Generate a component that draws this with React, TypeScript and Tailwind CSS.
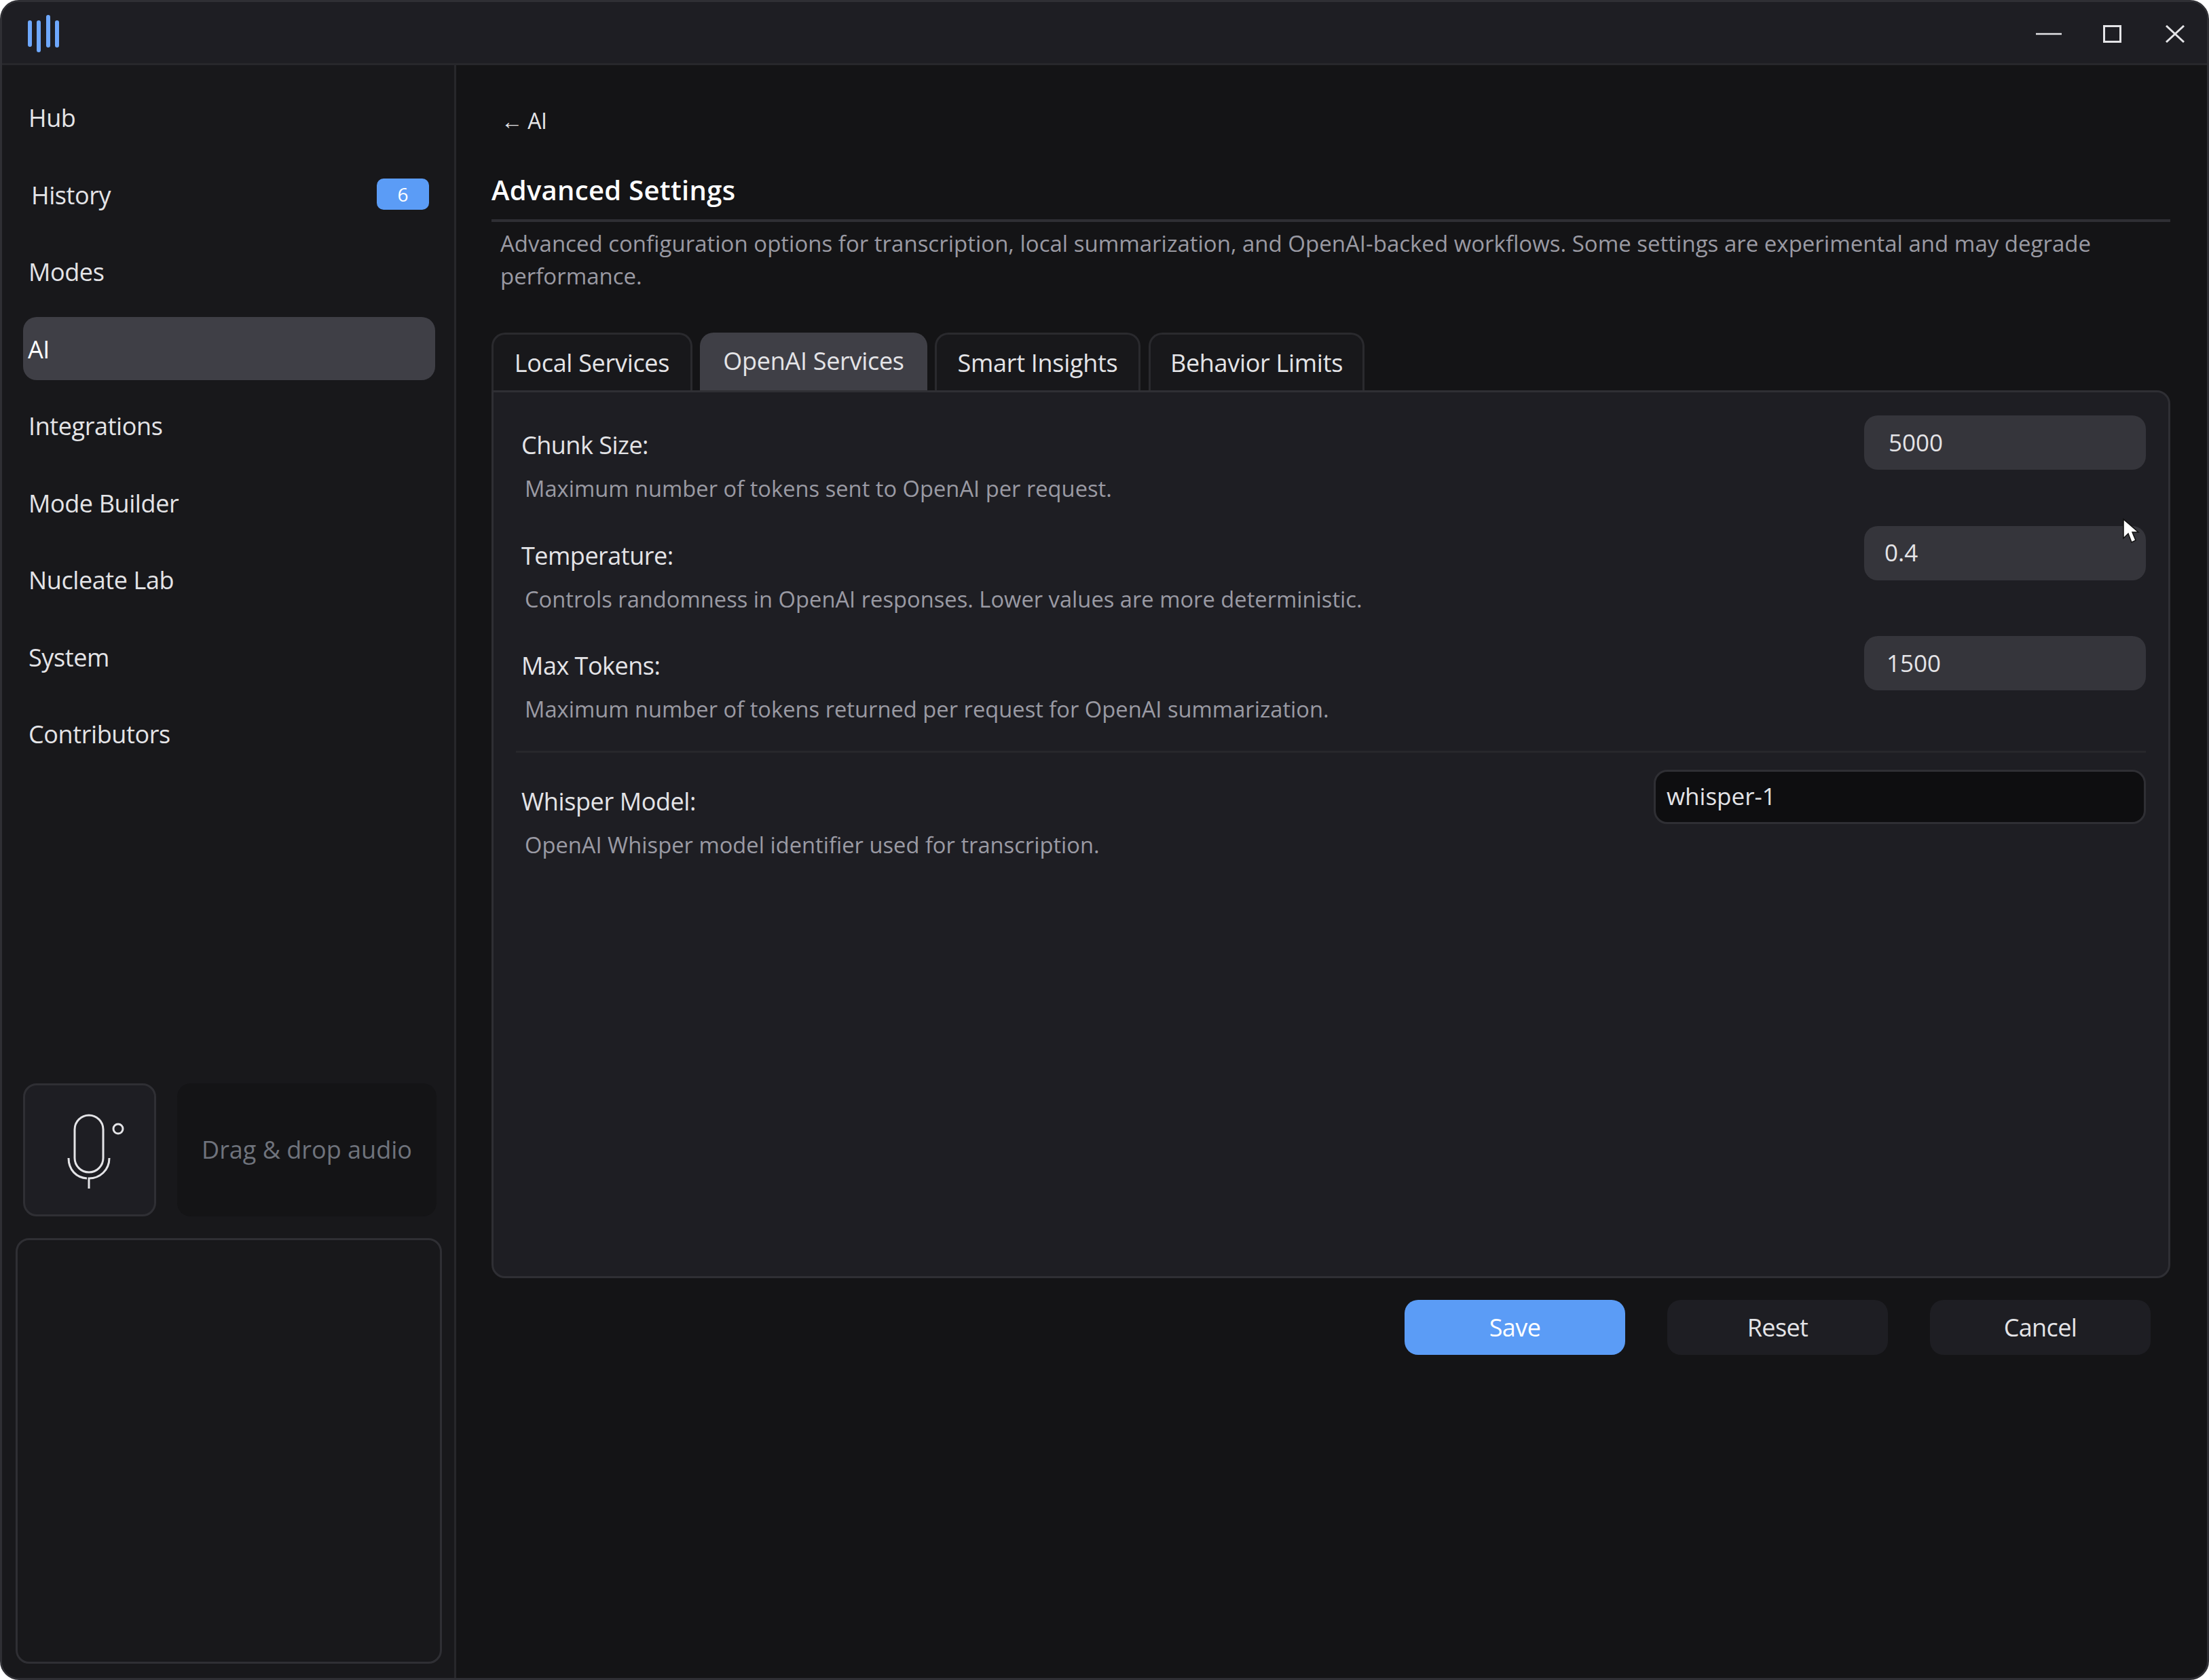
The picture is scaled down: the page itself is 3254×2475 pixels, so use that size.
const NAV = ["Hub", "History", "Modes", "AI", "Integrations", "Mode Builder", "Nucleate Lab", "System", "Contributors"];
const TABS = [
  { label: "Local Services", w: "w-[296px]" },
  { label: "OpenAI Services", w: "w-[335px]" },
  { label: "Smart Insights", w: "w-[303px]" },
  { label: "Behavior Limits", w: "w-[318px] ml-[1px]" },
];
const ROWS = [
  { label: "Chunk Size:", desc: "Maximum number of tokens sent to OpenAI per request.", value: "5000", pad: "pl-[36px]" },
  { label: "Temperature:", desc: "Controls randomness in OpenAI responses. Lower values are more deterministic.", value: "0.4", pad: "pl-[30px]" },
  { label: "Max Tokens:", desc: "Maximum number of tokens returned per request for OpenAI summarization.", value: "1500", pad: "pl-[33px]" },
];

function Logo() {
  return (
    <svg width="46" height="56" viewBox="0 0 46 56" fill="none" stroke="#6ea8fe" strokeWidth="6" strokeLinecap="round">
      <path d="M3 11V44M16 11V52M30 3V45M43 11V45" />
    </svg>
  );
}

function Mic() {
  return (
    <svg width="96" height="116" viewBox="0 0 96 116" fill="none" stroke="#e4e4e7" strokeWidth="3">
      <rect x="11" y="2" width="42" height="84" rx="21" />
      <path d="M2 65C2 83 14 94 29 95M62 65C62 83 48 95 32 95V110" />
      <circle cx="75" cy="22" r="7" />
    </svg>
  );
}

function Row({ label, desc, value, pad }: { label: string; desc: string; value: string; pad: string }) {
  return (
    <div className="flex h-[162.5px] justify-between">
      <div className="pl-[8px]">
        <div className="mt-[20px] h-[48px] text-[36px] leading-[48px] tracking-[-0.5px] text-[#e4e4e7]">{label}</div>
        <div className="mt-[18px] pl-[5px] text-[32.7px] leading-[44px] text-[#9a9aa3]">{desc}</div>
      </div>
      <div className={`flex h-[80px] w-[415px] items-center rounded-[20px] bg-[#35353b] ${pad} text-[35px] text-[#e4e4e7]`}>{value}</div>
    </div>
  );
}

export default function App() {
  return (
    <div className="relative flex h-[2475px] w-[3254px] flex-col overflow-hidden rounded-[28px] border-[3px] border-[#2f2f34] bg-[#141416] font-['Open_Sans','Noto_Sans',sans-serif]">
      <header className="flex h-[93px] shrink-0 items-center justify-between border-b-[3px] border-[#27272b] bg-[#1e1e23] pl-[38px] pr-[33px] pt-[3px]">
        <Logo />
        <div className="flex items-center">
          <svg className="mr-[61px]" width="38" height="4" viewBox="0 0 38 4"><path d="M0 2H38" stroke="#e4e4e7" strokeWidth="2.5" /></svg>
          <svg className="mr-[65px]" width="27" height="26" viewBox="0 0 27 26" fill="none"><rect x="1.5" y="1.5" width="24" height="23" stroke="#e4e4e7" strokeWidth="3" /></svg>
          <svg width="28" height="26" viewBox="0 0 28 26" fill="none"><path d="M1 1L27 25M27 1L1 25" stroke="#e4e4e7" strokeWidth="3" /></svg>
        </div>
      </header>

      <div className="flex min-h-0 flex-1">
        <aside className="flex w-[669px] shrink-0 flex-col border-r-[3px] border-[#27272b] bg-[#18181b] pb-[21px] pl-[20px] pr-[18px]">
          <nav className="flex flex-col gap-[20.5px] pl-[11px] pr-[10px] pt-[30px]">
            {NAV.map((n) => {
              const active = n === "AI";
              return (
                <div key={n} className={`flex h-[93px] items-center justify-between rounded-[20px] text-[36px] tracking-[-0.4px] ${active ? "bg-[#3f3f46] pl-[7px] text-white" : "pl-[8px] text-[#e4e4e7]"} ${n === "History" ? "pl-[12px] pr-[9px]" : ""}`}>
                  <span className="pt-[3px]">{n}</span>
                  {n === "History" && (
                    <span className="flex h-[46px] w-[77px] items-center justify-center rounded-[10px] bg-[#5b9cf6] text-[28px] tracking-normal text-white">6</span>
                  )}
                </div>
              );
            })}
          </nav>
          <div className="mt-auto flex h-[196px] gap-[31px] pl-[11px] pr-[8px]">
            <div className="flex w-[196px] items-center justify-center rounded-[20px] border-[3px] border-[#2f2f34] bg-[#1e1e23] pl-[30px] pt-[10px]">
              <Mic />
            </div>
            <div className="flex flex-1 items-center justify-center rounded-[20px] bg-[#141416] text-[36px] text-[#6f737c]">Drag &amp; drop audio</div>
          </div>
          <div className="mt-[32px] h-[627px] rounded-[20px] border-[3px] border-[#2f2f34]" />
        </aside>

        <main className="flex min-w-0 flex-1 flex-col pl-[52px] pr-[54px]">
          <div className="pl-[14px] pt-[61px] text-[32px] leading-[42px] tracking-[-0.5px] text-[#e4e4e7]">← AI</div>
          <h1 className="mt-[56px] border-b-[4px] border-[#2f2f34] pb-[18px] text-[40px] font-semibold leading-[50px] tracking-[0.3px] text-white">Advanced Settings</h1>
          <p className="mt-[8px] pl-[13px] text-[33px] leading-[48px] text-[#9a9aa3]">
            Advanced configuration options for transcription, local summarization, and OpenAI-backed workflows. Some settings are experimental and may degrade performance.
          </p>
          <div className="mt-[59px] flex h-[85px] gap-[11px]">
            {TABS.map((t) => {
              const active = t.label === "OpenAI Services";
              return (
                <div key={t.label} className={`flex ${t.w} items-center justify-center rounded-t-[20px] border-x-[3px] border-t-[3px] text-[36px] tracking-[-0.3px] text-[#e4e4e7] ${active ? "border-[#3f3f46] bg-[#3f3f46] pb-[4px]" : "border-[#2a2a2e] bg-[#18181b] pt-[2px]"}`}>
                  {t.label}
                </div>
              );
            })}
          </div>
          <section className="flex h-[310px] flex-1 flex-col rounded-b-[20px] rounded-tr-[20px] border-[3px] border-[#2f2f34] bg-[#1e1e23] pl-[33px] pr-[33px] pt-[34px]">
            {ROWS.map((r) => (
              <Row key={r.label} {...r} />
            ))}
            <div className="mt-[6px] h-[3px] bg-[#27272b]" />
            <div className="flex justify-between pt-[25px]">
              <div className="pl-[8px]">
                <div className="mt-[23px] h-[48px] text-[36px] leading-[48px] tracking-[-0.4px] text-[#e4e4e7]">Whisper Model:</div>
                <div className="mt-[18px] pl-[5px] text-[32.7px] leading-[44px] text-[#9a9aa3]">OpenAI Whisper model identifier used for transcription.</div>
              </div>
              <div className="flex h-[80px] w-[725px] items-center rounded-[20px] border-[3px] border-[#2f2f34] bg-[#0e0e10] pl-[16px] text-[35px] text-[#e4e4e7]">whisper-1</div>
            </div>
          </section>
          <div className="flex h-[589px] shrink-0 items-start justify-end gap-[62px] pr-[29px] pt-[32px] text-[36px] tracking-[-0.6px]">
            <button className="flex h-[81px] w-[325px] items-center justify-center rounded-[20px] bg-[#5b9cf6] text-white">Save</button>
            <button className="flex h-[81px] w-[325px] items-center justify-center rounded-[20px] bg-[#1e1e23] text-[#e4e4e7]">Reset</button>
            <button className="flex h-[81px] w-[325px] items-center justify-center rounded-[20px] bg-[#1e1e23] text-[#e4e4e7]">Cancel</button>
          </div>
        </main>
      </div>

      <svg className="absolute left-[3123px] top-[760px]" width="26" height="38" viewBox="0 0 26 38">
        <path d="M2 2V30L9 23L14 36L20 33L15 21H24Z" fill="#fff" stroke="#111" strokeWidth="1.5" />
      </svg>
    </div>
  );
}
